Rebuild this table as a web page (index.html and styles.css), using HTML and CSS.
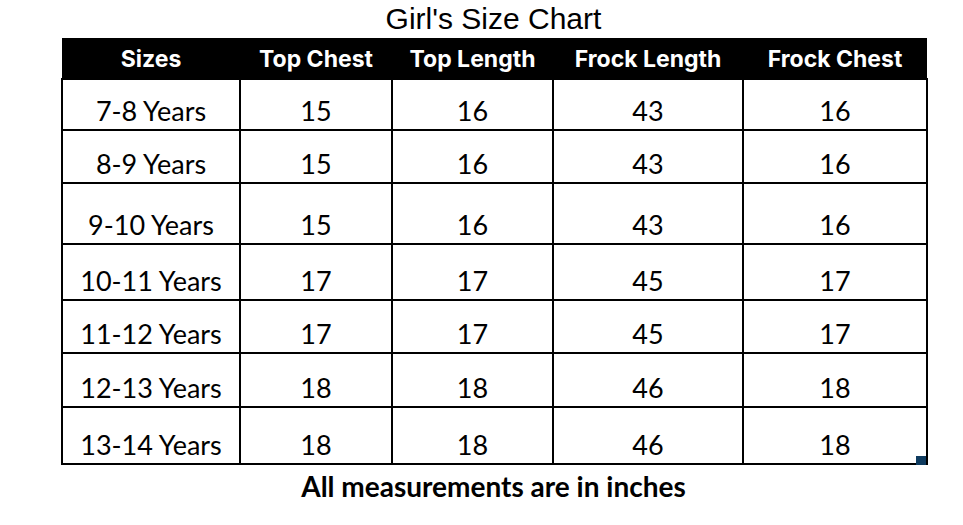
FILE: index.html
```html
<!DOCTYPE html>
<html>
<head>
<meta charset="utf-8">
<link rel="stylesheet" href="styles.css">
</head>
<body>
<div class="sheet">
  <h1 class="title">Girl's Size Chart</h1>
  <table class="chart">
    <colgroup>
      <col class="c1"><col class="c2"><col class="c3"><col class="c4"><col class="c5">
    </colgroup>
    <thead>
      <tr class="head">
        <th>Sizes</th><th>Top Chest</th><th>Top Length</th><th>Frock Length</th><th>Frock Chest</th>
      </tr>
    </thead>
    <tbody>
      <tr class="r1"><td>7-8 Years</td><td>15</td><td>16</td><td>43</td><td>16</td></tr>
      <tr class="r2"><td>8-9 Years</td><td>15</td><td>16</td><td>43</td><td>16</td></tr>
      <tr class="r3"><td>9-10 Years</td><td>15</td><td>16</td><td>43</td><td>16</td></tr>
      <tr class="r4"><td>10-11 Years</td><td>17</td><td>17</td><td>45</td><td>17</td></tr>
      <tr class="r5"><td>11-12 Years</td><td>17</td><td>17</td><td>45</td><td>17</td></tr>
      <tr class="r6"><td>12-13 Years</td><td>18</td><td>18</td><td>46</td><td>18</td></tr>
      <tr class="r7"><td>13-14 Years</td><td>18</td><td>18</td><td>46</td><td>18</td></tr>
    </tbody>
  </table>
  <div class="handle"></div>
  <p class="note">All measurements are in inches</p>
</div>
</body>
</html>
```
FILE: styles.css
```css
html, body {
  margin: 0;
  padding: 0;
  background: #ffffff;
}
.sheet {
  position: relative;
  width: 865px;
  margin-left: 61px;
}
.title {
  margin: 0;
  height: 38px;
  font-family: "Liberation Sans", Arial, sans-serif;
  font-weight: normal;
  font-size: 30px;
  line-height: 38px;
  text-align: center;
  color: #000;
}
.chart {
  border-collapse: collapse;
  width: 865px;
  table-layout: fixed;
}
.c1 { width: 178px; }
.c2 { width: 152px; }
.c3 { width: 161px; }
.c4 { width: 190px; }
.c5 { width: 184px; }
.head th {
  background: #000;
  color: #fff;
  font-family: Inter, "Liberation Sans", sans-serif;
  font-weight: 700;
  font-size: 23px;
  height: 41px;
  padding: 0 0 6px 0;
  box-sizing: border-box;
  vertical-align: bottom;
  line-height: 26px;
  border: none;
  border-bottom: 2px solid #000;
}
.chart td {
  border: 2px solid #000;
  font-family: Lato, "Liberation Sans", sans-serif;
  font-size: 27px;
  color: #000;
  text-align: center;
  vertical-align: bottom;
  line-height: 30px;
  padding: 0 0 3px 0;
}
.r1 td { height: 46px; }
.r2 td { height: 48px; }
.r3 td { height: 56px; }
.r4 td { height: 51px; }
.r5 td { height: 48px; }
.r6 td { height: 49px; }
.r7 td { height: 52px; }
.handle {
  position: absolute;
  right: 0;
  top: 456px;
  width: 10px;
  height: 9px;
  background: #0f3b5f;
}
.note {
  margin: 4px 0 0 0;
  font-family: Lato, "Liberation Sans", sans-serif;
  font-weight: 700;
  font-size: 28px;
  text-align: center;
  color: #000;
}
```
